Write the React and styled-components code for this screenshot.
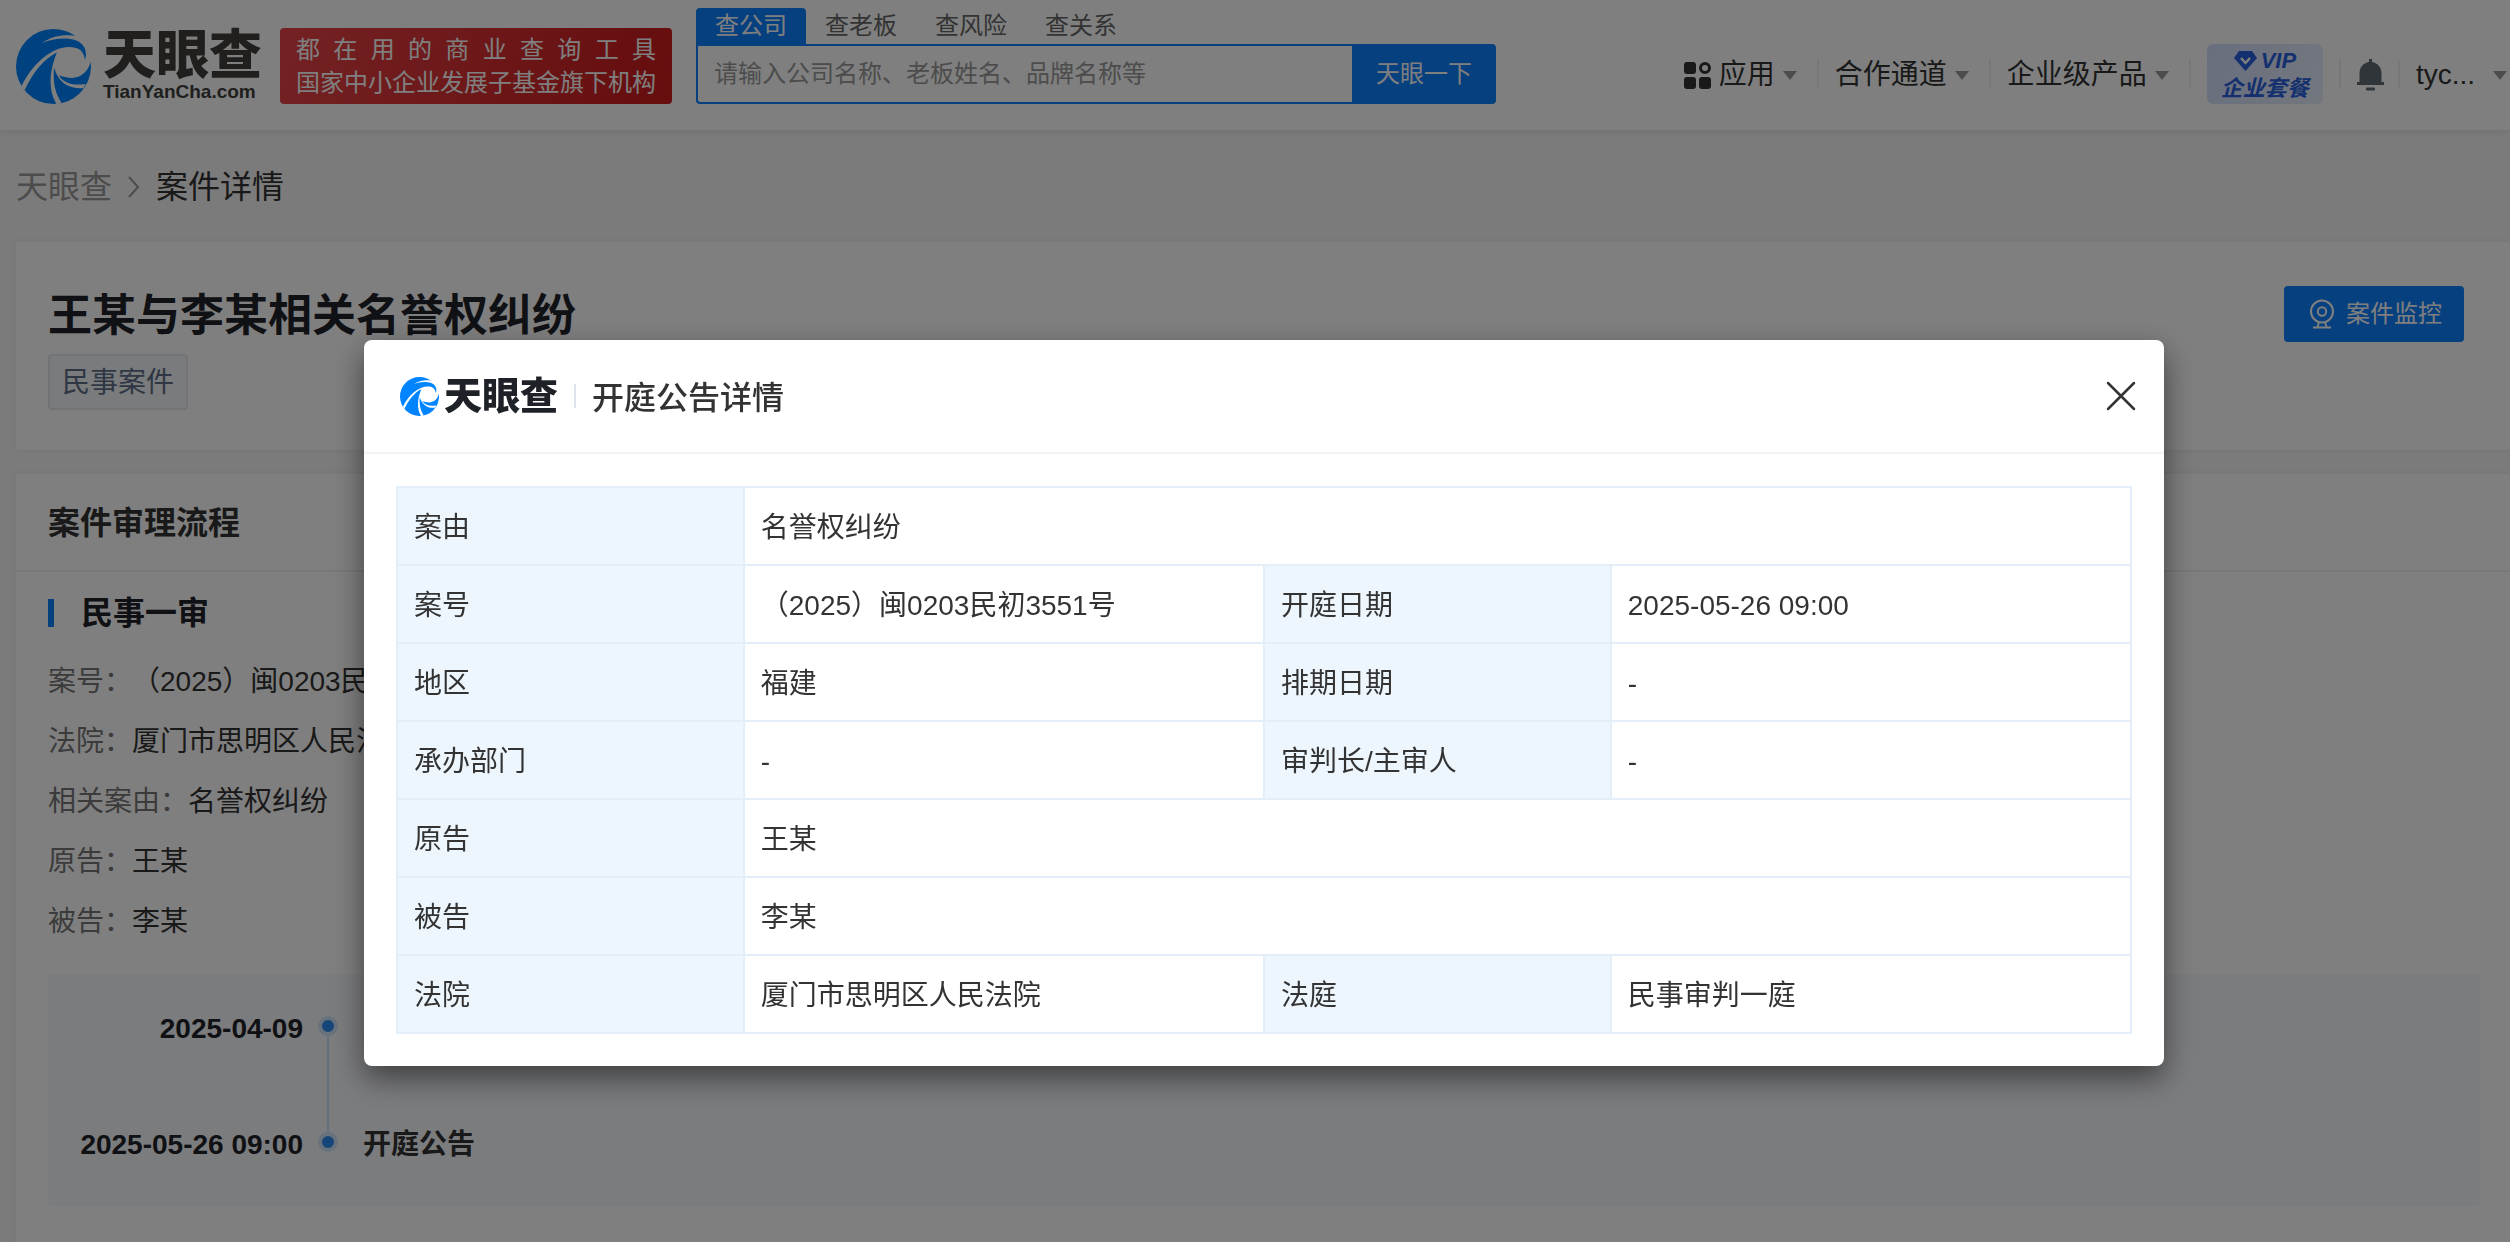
import React from 'react';
import styled, { createGlobalStyle } from 'styled-components';

const GlobalStyle = createGlobalStyle`
  * {
    box-sizing: border-box;
  }

  body {
    margin: 0;
    background: #f6f6f6;
    color: #333;
    font-family: "Liberation Sans", "Noto Sans CJK SC", sans-serif;
    font-size: 28px;
    line-height: 40px;
  }

  button, input {
    font: inherit;
  }

  a {
    color: inherit;
    text-decoration: none;
  }
`;

const Page = styled.div`
  display: flex;
  flex-direction: column;
  min-height: 100vh;
  overflow: hidden;
`;

/* header */

const Header = styled.header`
  display: flex;
  justify-content: space-between;
  height: 130px;
  padding: 0 3px 0 16px;
  background: #fff;
  box-shadow: 0 2px 8px rgba(0, 0, 0, 0.08);
`;

const HeaderLeft = styled.div`
  display: flex;
  align-items: flex-start;
`;

const Brand = styled.a`
  display: flex;
  align-items: center;
  gap: 12px;
  height: 76px;
  margin: 28px 18px 0 0;
`;

const BrandText = styled.span`
  display: flex;
  flex-direction: column;
  color: #403e3a;
  font-weight: 900;
`;

const BrandName = styled.span`
  font-size: 53px;
  line-height: 52px;
`;

const BrandDomain = styled.span`
  font-size: 19px;
  line-height: 20px;
`;

const Slogan = styled.div`
  width: 392px;
  height: 76px;
  margin: 28px 24px 0 0;
  padding: 5px 16px;
  border-radius: 4px;
  background: linear-gradient(110deg, #e84448, #cc1a1c);
  color: #fff;
  font-size: 24px;
  line-height: 33px;
`;

const SloganSpread = styled.div`
  display: flex;
  justify-content: space-between;
`;

const Search = styled.form`
  width: 800px;
  padding-top: 8px;
  font-size: 24px;
`;

const SearchTabs = styled.div`
  display: flex;
`;

const SearchTab = styled.button`
  width: 110px;
  height: 36px;
  padding: 0;
  border: 0;
  border-radius: 4px 4px 0 0;
  background: ${(props) => (props.$active ? '#0e80ff' : 'transparent')};
  color: ${(props) => (props.$active ? '#fff' : '#666')};
  line-height: 36px;
`;

const SearchBox = styled.div`
  display: flex;
  height: 60px;
`;

const SearchInput = styled.input`
  flex: 1;
  min-width: 0;
  padding: 0 16px;
  border: 2px solid #0e80ff;
  border-right: 0;
  border-radius: 0 0 0 4px;
  background: #fff;
  outline: none;

  &::placeholder {
    color: #999;
    opacity: 1;
  }
`;

const SearchButton = styled.button`
  width: 144px;
  padding: 0;
  border: 0;
  border-radius: 0 4px 4px 0;
  background: #0e80ff;
  color: #fff;
`;

const Nav = styled.nav`
  display: flex;
  align-items: center;
  height: 60px;
  margin-top: 44px;
`;

const NavLink = styled.a`
  display: flex;
  align-items: center;
  gap: ${(props) => (props.$wide ? '18px' : '8px')};
  padding-top: 2px;
  white-space: nowrap;
`;

const NavDivider = styled.span`
  width: 2px;
  height: 28px;
  margin: 0 16px 0 ${(props) => props.$before || '20px'};
  background: #eee;
`;

const Caret = styled.span`
  border: 7px solid transparent;
  border-top: 9px solid #999;
  border-bottom: 0;
`;

const VipBadge = styled.a`
  display: flex;
  flex-direction: column;
  align-items: center;
  width: 116px;
  height: 60px;
  padding-top: 3px;
  border-radius: 6px;
  background: linear-gradient(110deg, #d0defc, #e8eefc);
  color: #2860dc;
  font-size: 22px;
  font-style: italic;
  font-weight: 700;
  line-height: 28px;
`;

const VipTop = styled.span`
  display: flex;
  align-items: center;
  gap: 4px;
`;

/* page body */

const Main = styled.main`
  display: flex;
  flex: 1;
  flex-direction: column;
  padding-left: 16px;
`;

const Breadcrumb = styled.nav`
  display: flex;
  align-items: center;
  gap: 15px;
  height: 112px;
  padding-top: 2px;
  font-size: 32px;
`;

const BreadcrumbLink = styled.a`
  color: #999;
`;

const Card = styled.section`
  flex: ${(props) => (props.$fill ? '1' : 'none')};
  margin-bottom: ${(props) => (props.$fill ? '0' : '24px')};
  background: #fff;
  box-shadow: 0 0 6px rgba(0, 0, 0, 0.06);
`;

const CaseHead = styled.div`
  display: flex;
  justify-content: space-between;
  align-items: flex-start;
  padding: 44px 46px 40px 32px;
`;

const CaseTitle = styled.h1`
  margin: 0 0 8px;
  color: #1e2228;
  font-size: 44px;
  font-weight: 700;
  line-height: 60px;
`;

const Tag = styled.span`
  display: inline-block;
  height: 56px;
  padding: 0 12px;
  border: 2px solid #e2e6ec;
  border-radius: 4px;
  background: #f4f6f9;
  color: #5f6f88;
  line-height: 54px;
`;

const MonitorButton = styled.button`
  display: flex;
  align-items: center;
  justify-content: center;
  gap: 12px;
  width: 180px;
  height: 56px;
  padding: 0 0 0 4px;
  border: 0;
  border-radius: 4px;
  background: #0e80ff;
  color: #fff;
  font-size: 24px;
`;

const CardTitle = styled.h2`
  margin: 0;
  padding: 2px 32px 0;
  border-bottom: 2px solid #f0f0f0;
  font-size: 32px;
  font-weight: 700;
  line-height: 94px;
`;

const CardBody = styled.div`
  padding: 2px 30px 36px 32px;
`;

const StageTitle = styled.h3`
  display: flex;
  align-items: center;
  gap: 27px;
  height: 78px;
  margin: 0;
  color: #1e2228;
  font-size: 32px;
  font-weight: 700;

  &::before {
    content: "";
    width: 6px;
    height: 28px;
    background: #0e80ff;
  }
`;

const Facts = styled.dl`
  margin: 0 0 22px;
`;

const Fact = styled.div`
  display: flex;
  line-height: 60px;

  dt {
    color: #777;
  }

  dd {
    margin: 0;
  }
`;

const Timeline = styled.ol`
  margin: 0;
  padding: 35px 0 41px;
  border-radius: 4px;
  background: #f7f9fc;
  list-style: none;
  font-weight: 700;
`;

const TimelineItem = styled.li`
  display: grid;
  grid-template-columns: 255px 20px 1fr;
  min-height: ${(props) => (props.$last ? '40px' : '116px')};
`;

const TimelineDate = styled.time`
  color: #1e2228;
  text-align: right;
`;

const TimelineTrack = styled.span`
  display: flex;
  flex-direction: column;
  align-items: center;
  width: 20px;
  margin: 7px 15px -7px;
`;

const Dot = styled.span`
  width: 20px;
  height: 20px;
  border: 4px solid #d0e4f8;
  border-radius: 50%;
  background: #2c8cf0;
`;

const TrackLine = styled.span`
  flex: 1;
  width: 2px;
  background: #c4e0fa;
`;

const TimelineLabel = styled.span`
  padding-left: 40px;
`;

/* dialog */

const Overlay = styled.div`
  position: fixed;
  inset: 0;
  padding: 340px 0 0 18px;
  background: rgba(0, 0, 0, 0.5);
`;

const Dialog = styled.div`
  width: 72%;
  min-width: 1800px;
  margin: 0 auto;
  border-radius: 8px;
  background: #fff;
  box-shadow: 0 12px 30px rgba(0, 0, 0, 0.5);
`;

const DialogHead = styled.div`
  display: flex;
  align-items: center;
  height: 114px;
  padding: 0 24px 0 36px;
  border-bottom: 2px solid #f3f3f3;
`;

const DialogBrand = styled.span`
  display: flex;
  align-items: center;
  gap: 5px;
  color: #1e2228;
  font-size: 38px;
  font-weight: 900;
`;

const DialogDivider = styled.span`
  width: 2px;
  height: 24px;
  margin: 0 16px;
  background: #dfe4ea;
`;

const DialogTitle = styled.h2`
  flex: 1;
  margin: 0;
  padding-top: 3px;
  font-size: 32px;
  font-weight: 500;
`;

const CloseButton = styled.button`
  display: flex;
  padding: 4px;
  border: 0;
  background: none;
`;

const DialogBody = styled.div`
  padding: 32px;
`;

const InfoTable = styled.table`
  width: 100%;
  border-collapse: collapse;
  table-layout: fixed;

  th, td {
    height: 78px;
    padding: 3px 16px 0;
    border: 2px solid #e3eef8;
    font-weight: 400;
    text-align: left;
  }

  th {
    background: #eef6fd;
  }
`;

const LabelCol = styled.col`
  width: 20%;
`;

const ValueCol = styled.col`
  width: 30%;
`;

const LogoMark = ({ size }) => (
  <svg width={size} height={size} viewBox="0 0 224 224" aria-hidden="true">
    <circle cx="112" cy="112" r="112" fill="#0084ff" />
    <path
      fill="#fff"
      d="M78 42C108 20 142 16 174 20L240 0V96L223 98C216 128 192 146 168 146C152 146 138 142 128 138C140 160 168 170 208 164L202 176C160 182 126 160 114 116C110 150 114 190 136 220L122 226C100 190 94 140 122 70C84 88 50 130 26 182L16 172C50 100 110 54 158 54C186 54 202 64 206 92C214 70 206 44 180 34C150 24 110 28 78 42Z"
    />
  </svg>
);

const AppsIcon = () => (
  <svg width="27" height="27" viewBox="0 0 27 27" fill="#333" aria-hidden="true">
    <rect x="0" y="0" width="12" height="12" rx="3" />
    <rect x="0" y="15" width="12" height="12" rx="3" />
    <rect x="15" y="15" width="12" height="12" rx="3" />
    <circle cx="21" cy="6" r="4.5" fill="none" stroke="#333" strokeWidth="3" />
  </svg>
);

const GemIcon = () => (
  <svg width="23" height="20" viewBox="0 0 23 20" aria-hidden="true">
    <path d="M5 0H18L23 7L11.5 20L0 7Z" fill="#2860dc" />
    <path d="M7 7L11.5 12L16 7" fill="none" stroke="#fff" strokeWidth="2.5" />
  </svg>
);

const BellIcon = () => (
  <svg width="27" height="32" viewBox="0 0 27 32" fill="#606b72" aria-hidden="true">
    <path d="M12 0H15V3C21 4 24.500 9 24.500 14V23H27V26H0V23H2.500V14C2.500 9 6 4 12 3Z" />
    <rect x="9" y="28.500" width="9" height="3" rx="1" />
  </svg>
);

const CameraIcon = () => (
  <svg width="24" height="30" viewBox="0 0 24 30" fill="none" stroke="#fff" strokeWidth="2" aria-hidden="true">
    <circle cx="12" cy="12.500" r="11" />
    <circle cx="12" cy="12.500" r="4.200" />
    <path d="M9 23L7.500 28M15 23L16.500 28M3 28.500H21" />
  </svg>
);

const ChevronIcon = () => (
  <svg width="14" height="22" viewBox="0 0 14 22" fill="none" stroke="#999" strokeWidth="2" aria-hidden="true">
    <path d="M2 1L11 11L2 21" />
  </svg>
);

const CloseIcon = () => (
  <svg width="30" height="30" viewBox="0 0 30 30" fill="none" stroke="#333" strokeWidth="2.500" strokeLinecap="round" aria-hidden="true">
    <path d="M2 2L28 28M28 2L2 28" />
  </svg>
);

const searchTabs = ['查公司', '查老板', '查风险', '查关系'];

const facts = [
  ['案号：', '（2025）闽0203民初3551号'],
  ['法院：', '厦门市思明区人民法院'],
  ['相关案由：', '名誉权纠纷'],
  ['原告：', '王某'],
  ['被告：', '李某'],
];

const timeline = [
  { date: '2025-04-09', label: '立案' },
  { date: '2025-05-26 09:00', label: '开庭公告' },
];

const rows = [
  [['案由', '名誉权纠纷']],
  [['案号', '（2025）闽0203民初3551号'], ['开庭日期', '2025-05-26 09:00']],
  [['地区', '福建'], ['排期日期', '-']],
  [['承办部门', '-'], ['审判长/主审人', '-']],
  [['原告', '王某']],
  [['被告', '李某']],
  [['法院', '厦门市思明区人民法院'], ['法庭', '民事审判一庭']],
];

function PageHeader() {
  return (
    <Header>
      <HeaderLeft>
        <Brand href="#">
          <LogoMark size={75} />
          <BrandText>
            <BrandName>天眼查</BrandName>
            <BrandDomain>TianYanCha.com</BrandDomain>
          </BrandText>
        </Brand>
        <Slogan>
          <SloganSpread>
            {[...'都在用的商业查询工具'].map((char) => (
              <span key={char}>{char}</span>
            ))}
          </SloganSpread>
          国家中小企业发展子基金旗下机构
        </Slogan>
        <Search onSubmit={(e) => e.preventDefault()}>
          <SearchTabs>
            {searchTabs.map((tab, i) => (
              <SearchTab key={tab} type="button" $active={i === 0}>{tab}</SearchTab>
            ))}
          </SearchTabs>
          <SearchBox>
            <SearchInput
              type="text"
              aria-label="搜索"
              placeholder="请输入公司名称、老板姓名、品牌名称等"
            />
            <SearchButton type="submit">天眼一下</SearchButton>
          </SearchBox>
        </Search>
      </HeaderLeft>
      <Nav>
        <NavLink href="#"><AppsIcon />应用<Caret /></NavLink>
        <NavDivider />
        <NavLink href="#">合作通道<Caret /></NavLink>
        <NavDivider />
        <NavLink href="#">企业级产品<Caret /></NavLink>
        <NavDivider />
        <VipBadge href="#">
          <VipTop><GemIcon />VIP</VipTop>
          企业套餐
        </VipBadge>
        <NavDivider $before="16px" />
        <NavLink href="#" aria-label="消息"><BellIcon /></NavLink>
        <NavDivider $before="14px" />
        <NavLink href="#" $wide>tyc...<Caret /></NavLink>
      </Nav>
    </Header>
  );
}

function HearingDialog() {
  return (
    <Overlay>
      <Dialog role="dialog" aria-modal="true" aria-labelledby="dialog-title">
        <DialogHead>
          <DialogBrand><LogoMark size={39} />天眼查</DialogBrand>
          <DialogDivider />
          <DialogTitle id="dialog-title">开庭公告详情</DialogTitle>
          <CloseButton type="button" aria-label="关闭"><CloseIcon /></CloseButton>
        </DialogHead>
        <DialogBody>
          <InfoTable>
            <colgroup>
              <LabelCol />
              <ValueCol />
              <LabelCol />
              <ValueCol />
            </colgroup>
            <tbody>
              {rows.map((cells) => (
                <tr key={cells[0][0]}>
                  {cells.map(([label, value]) => (
                    <React.Fragment key={label}>
                      <th scope="row">{label}</th>
                      <td colSpan={cells.length === 1 ? 3 : 1}>{value}</td>
                    </React.Fragment>
                  ))}
                </tr>
              ))}
            </tbody>
          </InfoTable>
        </DialogBody>
      </Dialog>
    </Overlay>
  );
}

export default function App() {
  return (
    <>
      <GlobalStyle />
      <Page>
        <PageHeader />
        <Main>
          <Breadcrumb>
            <BreadcrumbLink href="#">天眼查</BreadcrumbLink>
            <ChevronIcon />
            <span>案件详情</span>
          </Breadcrumb>
          <Card>
            <CaseHead>
              <div>
                <CaseTitle>王某与李某相关名誉权纠纷</CaseTitle>
                <Tag>民事案件</Tag>
              </div>
              <MonitorButton type="button"><CameraIcon />案件监控</MonitorButton>
            </CaseHead>
          </Card>
          <Card $fill>
            <CardTitle>案件审理流程</CardTitle>
            <CardBody>
              <StageTitle>民事一审</StageTitle>
              <Facts>
                {facts.map(([label, value]) => (
                  <Fact key={label}>
                    <dt>{label}</dt>
                    <dd>{value}</dd>
                  </Fact>
                ))}
              </Facts>
              <Timeline>
                {timeline.map(({ date, label }, i) => (
                  <TimelineItem key={date} $last={i === timeline.length - 1}>
                    <TimelineDate>{date}</TimelineDate>
                    <TimelineTrack>
                      <Dot />
                      {i < timeline.length - 1 && <TrackLine />}
                    </TimelineTrack>
                    <TimelineLabel>{label}</TimelineLabel>
                  </TimelineItem>
                ))}
              </Timeline>
            </CardBody>
          </Card>
        </Main>
      </Page>
      <HearingDialog />
    </>
  );
}
